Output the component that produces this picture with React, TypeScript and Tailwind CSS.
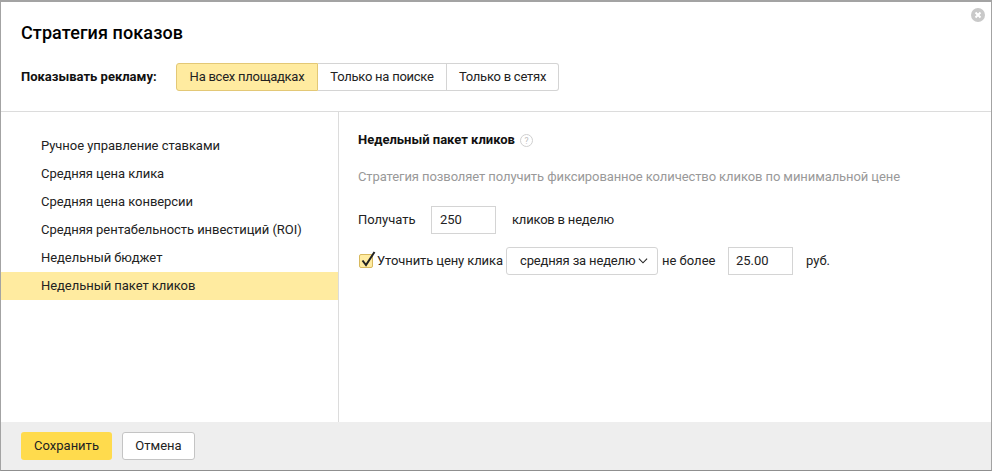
import React from "react";

const font = { fontFamily: "Roboto, sans-serif" };

const strategies = [
  "Ручное управление ставками",
  "Средняя цена клика",
  "Средняя цена конверсии",
  "Средняя рентабельность инвестиций (ROI)",
  "Недельный бюджет",
  "Недельный пакет кликов",
];

export default function App() {
  return (
    <div className="relative flex h-[471px] w-[992px] flex-col overflow-hidden border-t-2 border-r border-b border-l border-t-[#a3a3a3] border-r-[#a3a3a3] border-b-[#8f8f8f] border-l-[#a3a3a3] bg-white font-['Roboto',sans-serif] text-[13px] text-[#222]">
      {/* Close */}
      <svg className="absolute right-[6px] top-[6px] h-[14px] w-[14px]" viewBox="0 0 14 14">
        <circle cx="7" cy="7" r="7" fill="#c9c9c9" />
        <path d="M4.5 4.5l5 5M9.5 4.5l-5 5" stroke="#fff" strokeWidth="2" />
      </svg>

      {/* Header */}
      <div className="h-[110px] shrink-0 border-b border-[#dcdcdc] pl-[20px] pt-[20px]">
        <h1 className="text-[18px] font-medium leading-[22px] tracking-[0.1px] text-black">Стратегия показов</h1>
        <div className="mt-[19px] flex items-center">
          <span className="w-[155px] text-[13px] font-bold text-[#111]">Показывать рекламу:</span>
          <div className="flex h-[28px] items-stretch tracking-[-0.25px]">
            <button className="w-[142px] rounded-l-[3px] border border-[#e3c876] bg-[#ffeba0]">На всех площадках</button>
            <button className="w-[129px] border-y border-r border-[#d4d4d4]">Только на поиске</button>
            <button className="w-[112px] rounded-r-[3px] border-y border-r border-[#d4d4d4]">Только в сетях</button>
          </div>
        </div>
      </div>

      {/* Body */}
      <div className="flex min-h-0 flex-1">
        <ul className="w-[338px] shrink-0 border-r border-[#dcdcdc] pt-[20px] tracking-[-0.05px]">
          {strategies.map((s, i) => (
            <li key={s} className={`flex h-[28px] items-center pl-[40px] ${i === 5 ? "bg-[#ffeba0]" : ""}`}>
              {s}
            </li>
          ))}
        </ul>

        <div className="flex-1 pl-[19px] pt-[19px]">
          <div className="flex h-[18px] items-center">
            <span className="text-[13px] font-bold text-[#111]">Недельный пакет кликов</span>
            <svg className="ml-[5px] h-[13px] w-[13px]" viewBox="0 0 13 13" fill="none">
              <circle cx="6.5" cy="6.5" r="6" stroke="#cfcfcf" />
              <text x="6.5" y="9.5" textAnchor="middle" fontSize="8.5" fill="#bdbdbd" style={font}>?</text>
            </svg>
          </div>
          <p className="mt-[19px] h-[18px] whitespace-nowrap leading-[18px] tracking-[-0.09px] text-[#999]">
            Стратегия позволяет получить фиксированное количество кликов по минимальной цене
          </p>

          <div className="mt-[20px] flex h-[28px] items-center">
            <span className="w-[73px]">Получать</span>
            <div className="flex h-[28px] w-[65px] items-center border border-[#d4d4d4] pl-[8px]">250</div>
            <span className="ml-[16px] tracking-[-0.2px]">кликов в неделю</span>
          </div>

          <div className="mt-[13px] flex h-[28px] items-center">
            <span className="relative ml-px h-[14px] w-[14px] rounded-[2px] border border-[#d8b95e] bg-[#ffeba0]">
              <svg className="absolute -top-[5px] left-0 h-[18px] w-[17px]" viewBox="0 0 17 18" fill="none">
                <path d="M2.5 10.5l3.5 4.5L14.5 2" stroke="#222" strokeWidth="2" />
              </svg>
            </span>
            <span className="ml-[4px] w-[129px] whitespace-nowrap tracking-[-0.1px]">Уточнить цену клика</span>
            <button className="flex h-[28px] w-[152px] items-center whitespace-nowrap rounded-[3px] border border-[#d4d4d4] pl-[13px] tracking-[-0.15px]">
              средняя за неделю
              <svg className="ml-[3px] h-[8px] w-[10px]" viewBox="0 0 11 8" fill="none">
                <path d="M1 1.5l4.5 4.5L10 1.5" stroke="#222" strokeWidth="1.2" />
              </svg>
            </button>
            <span className="ml-[4px] w-[66px] whitespace-nowrap">не более</span>
            <div className="flex h-[28px] w-[65px] items-center border border-[#d4d4d4] pl-[7px]">25.00</div>
            <span className="ml-[13px]">руб.</span>
          </div>
        </div>
      </div>

      {/* Footer */}
      <div className="flex h-[48px] shrink-0 items-start gap-[10px] bg-[#eeeeee] pl-[20px] pt-[10px]">
        <button className="h-[28px] w-[91px] rounded-[3px] bg-[#ffdb4d]">Сохранить</button>
        <button className="h-[28px] w-[73px] rounded-[3px] border border-[#c4c4c4] bg-white">Отмена</button>
      </div>
    </div>
  );
}
